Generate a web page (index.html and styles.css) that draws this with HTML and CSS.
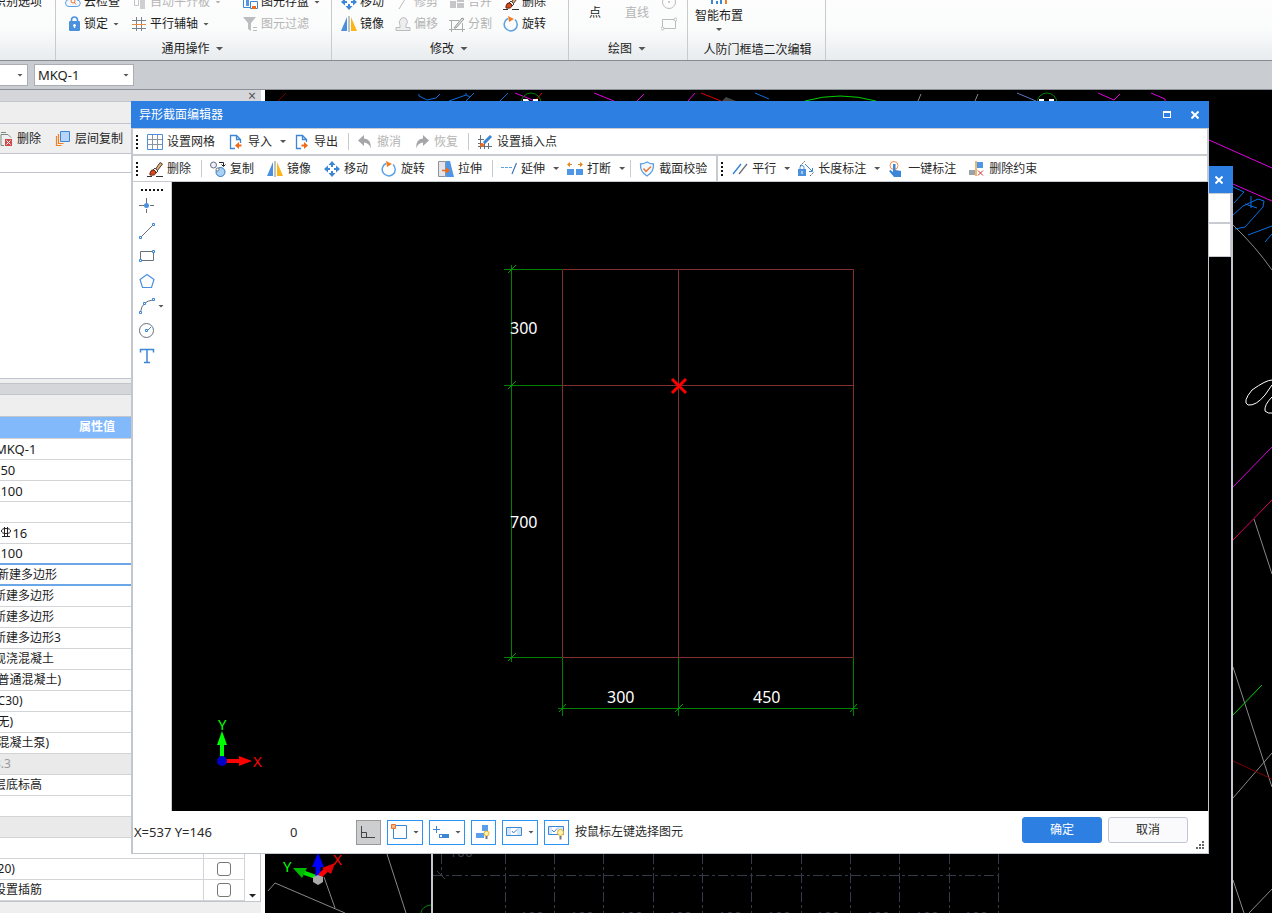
FILE: index.html
```
<!DOCTYPE html>
<html lang="zh-CN">
<head>
<meta charset="utf-8">
<title>异形截面编辑器</title>
<link rel="stylesheet" href="styles.css">
</head>
<body>
<svg class="sprite" aria-hidden="true">
  <symbol id="brush" viewBox="0 0 16 16"><path d="M8 9 13 1.500 15.500 3 10 10z" fill="#e8b070" stroke="#4a4038"/><path d="M6 9 8 7l3 3-2 2z" fill="#eee" stroke="#444"/><path d="M3 12q1-4 4-3l2 2q0 4-6 3z" fill="#d9481c" stroke="#5a2512"/><path d="M0 15.500h5M9 15.500h7" stroke="#333"/></symbol>
  <symbol id="copy" viewBox="0 0 16 16"><circle cx="3.500" cy="4" r="3" fill="#eef" stroke="#667079"/><circle cx="10.500" cy="11" r="4.500" fill="#a9d0f5" stroke="#2f78c4"/><circle cx="7.500" cy="8.500" r="1.500" fill="#fff" stroke="#667079"/><path d="M9 1.500h4.500V5M11.500 3.500l2 2 2-2" fill="none" stroke="#222"/></symbol>
  <symbol id="mirror" viewBox="0 0 16 16"><path d="M6 1v14H0z" fill="#4a90dc"/><path d="M10 1v14h6z" fill="#fdb515"/><path d="M8 0v16" stroke="#7f8a94"/></symbol>
  <symbol id="move" viewBox="0 0 16 16"><path d="M8 0l3.500 4h-7zM8 16l3.500-4h-7zM0 8l4-3.500v7zM16 8l-4-3.500v7z" fill="#3c86d6"/><path d="M8 3v3M8 10v3M3 8h3M10 8h3" stroke="#3c86d6" stroke-width="2"/></symbol>
  <symbol id="rotate" viewBox="0 0 16 16"><path d="M5 2.500A6.500 6.500 0 1 0 12 3.500" fill="none" stroke="#5ba0e6" stroke-width="1.500"/><path d="M5 0l6 3-5 3z" fill="#ef7d22"/></symbol>
  <symbol id="stretch" viewBox="0 0 16 16"><path d="M.5.5h7v15h-7z" fill="#e4e4ea" stroke="#8b939b"/><path d="M8 0h4l4 16H8z" fill="#4f97e6"/><path d="M4 9.500h5" stroke="#f06a1a" stroke-width="1.500"/><path d="M8 6.500l4 3-4 3z" fill="#f06a1a"/></symbol>
  <symbol id="extend" viewBox="0 0 16 16"><path d="M0 6.500h11" stroke="#5a9fe0" stroke-dasharray="3 1"/><path d="M15.500 2 11 13" stroke="#3c76b6" stroke-width="1.200"/></symbol>
  <symbol id="break" viewBox="0 0 16 16"><path d="M0 8h7v6H0zM9 8h7v6H9z" fill="#4f97e6"/><path d="M1 3.500h4M11 3.500h4" stroke="#e08618"/><path d="M3 1 0 3.500 3 6zM13 1l3 2.500L13 6z" fill="#e08618"/></symbol>
  <symbol id="shield" viewBox="0 0 16 16"><path d="M8 1q3 2 6.500 2 .5 8-6.500 12Q1 11 1.500 3 5 3 8 1z" fill="#f4f9ff" stroke="#5b9fe2" stroke-width="1.300"/><path d="M4.500 7.500 7 10.500 12 5.500" fill="none" stroke="#ee7328" stroke-width="1.400"/></symbol>
  <symbol id="parallel" viewBox="0 0 16 16"><path d="M1 13 9 3" stroke="#2f7fd6" stroke-width="1.300"/><path d="M7 13l8-10" stroke="#66717b" stroke-width="1.300"/></symbol>
  <symbol id="length" viewBox="0 0 16 16"><path d="M0 8h8v7H0z" fill="#4a90dc"/><path d="M2 8V6.500a2 2 0 0 1 4 0V8" fill="none" stroke="#4a90dc"/><path d="M4 10v3" stroke="#fff"/><path d="M7 3l7 7M11 10.500h3.500V7" fill="none" stroke="#3c86d6"/><path d="M2 5l5-5M12 15l4-4" stroke="#59636d" stroke-dasharray="2 1"/></symbol>
  <symbol id="touch" viewBox="0 0 16 16"><circle cx="6" cy="4.500" r="4" fill="none" stroke="#f08a4a"/><path d="M5 3h2.500v6l5.500 1v6H6L1 10l1.500-1L5 11z" fill="#3c86d6"/></symbol>
  <symbol id="unbind" viewBox="0 0 16 16"><path d="M8 1h6v6H8z" fill="#4f97e6"/><path d="M0 9h6v5H0z" fill="#9ca2ab"/><path d="M7 0v15" stroke="#e6a03c" stroke-width="1.500"/><path d="M9 9.500l5 5M14 9.500l-5 5" stroke="#d0342c"/></symbol>
  <symbol id="grid" viewBox="0 0 16 16"><path d="M.5.500h15v15H.5z" fill="#fff" stroke="#4a90dc"/><path d="M5.500 1v14M10.500 1v14M1 5.500h14M1 10.500h14" stroke="#8a949c"/></symbol>
  <symbol id="import" viewBox="0 0 16 16"><path d="M7 14.500H2.500V1.500h6l4 4V9M8.500 1.500v4h4" fill="none" stroke="#3c86d6" stroke-width="1.300"/><path d="M7 11.500l4-3.500v7z" fill="#f06a1a"/><path d="M11 11.500h2.500" stroke="#f06a1a" stroke-width="2"/></symbol>
  <symbol id="export" viewBox="0 0 16 16"><path d="M7 14.500H2.500V1.500h6l4 4V8M8.500 1.500v4h4" fill="none" stroke="#3c86d6" stroke-width="1.300"/><path d="M14 11.500 10 8v7z" fill="#f06a1a"/><path d="M7.500 11.500H10" stroke="#f06a1a" stroke-width="2"/></symbol>
  <symbol id="undo" viewBox="0 0 16 16"><path d="M1 6.500 7 1v3.500q7 0 7 10Q12 9 7 8.500V12z" fill="#a6a6a8"/></symbol>
  <symbol id="redo" viewBox="0 0 16 16"><path d="M15 6.500 9 1v3.500q-7 0-7 10Q4 9 9 8.500V12z" fill="#a6a6a8"/></symbol>
  <symbol id="insert" viewBox="0 0 16 16"><path d="M3.500 1v14M1 5.500h6M7.500 8v7M1 12.500h14M11.500 9v6M1 9.500h4" stroke="#66717b"/><path d="M7 9l7-7" stroke="#3c86d6" stroke-width="3"/><circle cx="5" cy="11" r="2" fill="#f06a1a"/></symbol>
  <symbol id="lock" viewBox="0 0 16 16"><path d="M6.500 7V4a3 3 0 0 1 6 0V7" fill="none" stroke="#4a90dc" stroke-width="1.600"/><rect x="4" y="5" width="11" height="10" rx="1" fill="#4a90dc"/><path d="M9.500 8v4M8 9.500h3" stroke="#fff" stroke-width="1.300"/></symbol>
  <symbol id="cloud" viewBox="0 0 16 16"><path d="M4 12.500a3 3 0 0 1 0-7Q5 1 9 2q3 1 3 4a3.200 3.200 0 0 1 0 6.500z" fill="#f3f8ff" stroke="#5b9fe2"/><path d="M9 8l2 2.500" stroke="#ee7328"/><circle cx="8" cy="7" r="2" fill="none" stroke="#ee7328"/></symbol>
  <symbol id="axes" viewBox="0 0 16 16"><path d="M5.500 1v14M10.500 1v14M1 12.500h14M1 4.500h14" stroke="#7a838b"/><path d="M1 8.500h14" stroke="#f08a3c"/></symbol>
  <symbol id="panels" viewBox="0 0 16 16"><path d="M3.500 2.500h4v9h-4z" fill="none" stroke="#c4c4c6"/><path d="M9 5h5v10H9z" fill="#cfcfd2"/></symbol>
  <symbol id="disk" viewBox="0 0 16 16"><path d="M4 4.500H1.500v9H8M8.500 7.500h7v7h-7z" fill="none" stroke="#3c86d6"/><path d="M4 5v7h3V5M9 3h5v3H9z" fill="#4f97e6"/><path d="M10 12h4v3h-4z" fill="#f06a1a"/></symbol>
  <symbol id="funnel" viewBox="0 0 16 16"><path d="M1 1h13L9 7v8l-3-2V7z" fill="#bcbdbf"/><path d="M11 11.500h4M11 14.500h4" stroke="#bcbdbf"/></symbol>
  <symbol id="offset" viewBox="0 0 16 16"><path d="M1 11.500h4V9.500q-2-4 1-7 3-2 5 0 3 3 0 7v2h4v3H1z" fill="#ededee" stroke="#bcbdbf"/></symbol>
  <symbol id="split" viewBox="0 0 16 16"><path d="M0 4.500h10M13.500 7v9M2.500 4v12M0 13.500h16" fill="none" stroke="#aaa"/><path d="M5 12l8-10 2 1-8 9z" fill="#ddd" stroke="#999"/></symbol>
  <symbol id="trim" viewBox="0 0 16 16"><path d="M4 15 12 2" stroke="#bbb"/></symbol>
  <symbol id="merge" viewBox="0 0 16 16"><path d="M1 7h6v7H1zM8 3h7v5H8zM8 9h7v5H8z" fill="#c6c6c9"/></symbol>
  <symbol id="rect-gray" viewBox="0 0 16 16"><path d="M1.500 3.500h13v9h-13z" fill="none" stroke="#bbb"/><circle cx="1.500" cy="12.500" r="1.500" fill="#fff" stroke="#bbb"/><circle cx="14.500" cy="3.500" r="1.500" fill="#fff" stroke="#bbb"/></symbol>
  <symbol id="circle-gray" viewBox="0 0 16 16"><circle cx="8" cy="8" r="6.500" fill="none" stroke="#bbb"/><circle cx="8" cy="8" r="1" fill="#bbb"/></symbol>
  <symbol id="page-x" viewBox="0 0 16 16"><path d="M4 3.500h7l3 3M4 1.500h5M4 14.500V3.500M4 14.500h3" fill="none" stroke="#7c8c80"/><path d="M8 8h7v7H8z" fill="#cf4a4a"/><path d="M9.500 9.500l4 4M13.500 9.500l-4 4" stroke="#fff"/></symbol>
  <symbol id="layers" viewBox="0 0 16 16"><path d="M5.500.5h9v10h-9z" fill="#b7d5fa" stroke="#3c86d6"/><path d="M3.500 3v9.500h5M1.500 5v9.500h5" fill="none" stroke="#f08020" stroke-width="1.200"/></symbol>
  <symbol id="point" viewBox="0 0 16 16"><path d="M7.500 0v5M7.500 11v4M0 7.500h5M11 7.500h4" stroke="#66717b"/><circle cx="7.500" cy="7.500" r="2.500" fill="#4a90e0"/></symbol>
  <symbol id="line" viewBox="0 0 16 16"><path d="M2 14 14 2" stroke="#66717b"/><path d="M.5 13.500h2v2h-2zM13.500.5h2v2h-2z" fill="#fff" stroke="#3c86d6"/></symbol>
  <symbol id="rect" viewBox="0 0 16 16"><path d="M1.500 3.500h13v9h-13z" fill="none" stroke="#66717b"/><path d="M.5 11.500h2v2h-2zM13.500 2.500h2v2h-2z" fill="#fff" stroke="#3c86d6"/></symbol>
  <symbol id="penta" viewBox="0 0 16 16"><path d="M8 1.500l7 5-2.500 8h-9L1 6.500z" fill="none" stroke="#4a90e0" stroke-width="1.200"/></symbol>
  <symbol id="arc" viewBox="0 0 16 16"><path d="M1.500 14Q3 3 14 2" fill="none" stroke="#66717b"/><path d="M.5 13.500h2v2h-2zM4.500 4.500h2v2h-2zM13.500.5h2v2h-2z" fill="#fff" stroke="#3c86d6"/></symbol>
  <symbol id="circle" viewBox="0 0 16 16"><circle cx="7.500" cy="7.500" r="7" fill="none" stroke="#66717b"/><path d="M8 8l4-4" stroke="#3c86d6"/><path d="M6.500 6.500h2v2h-2z" fill="#fff" stroke="#3c86d6"/></symbol>
  <symbol id="text" viewBox="0 0 16 16"><path d="M1.500 4.500v-3h13v3M8 2v12.500M5 14.500h6" fill="none" stroke="#3c86d6" stroke-width="1.500"/></symbol>
  <symbol id="ortho" viewBox="0 0 16 16"><path d="M1.500 2v11.500H15M2 8.500h4.500v5" fill="none" stroke="#444"/></symbol>
  <symbol id="snap" viewBox="0 0 16 16"><path d="M2.500 1.500h13v13h-13z" fill="none" stroke="#3c86d6"/><path d="M.5.5h4v4h-4z" fill="#f7b58a" stroke="#ee7328"/></symbol>
  <symbol id="plus" viewBox="0 0 16 16"><path d="M0 5.500h7M3.500 2v7" stroke="#3c86d6"/><path d="M6 10h10v4H6z" fill="#3c86d6"/><path d="M7 11h2v2H7z" fill="#fff"/></symbol>
  <symbol id="bulb-blocks" viewBox="0 0 16 16"><path d="M7 1h6v6H7zM1 9h8v5H1z" fill="#5a9eec"/><circle cx="11.500" cy="9.500" r="2.500" fill="#fff2b0" stroke="#e8b41c"/><path d="M11.500 12v3" stroke="#777" stroke-width="2"/></symbol>
  <symbol id="check" viewBox="0 0 16 16"><path d="M.5 3.500h15v8H.5z" fill="#d5e6fb" stroke="#3c86d6"/><path d="M5 4h6v7H5z" fill="#fff"/><path d="M6 7l1.500 2L11 5.500" fill="none" stroke="#3c86d6"/></symbol>
  <symbol id="check-bulb" viewBox="0 0 16 16"><path d="M.5 2.500h15v8H.5z" fill="#d5e6fb" stroke="#3c86d6"/><path d="M4 3h5v7H4z" fill="#fff"/><path d="M4 6l2 2 3-3.500" fill="none" stroke="#3c86d6"/><circle cx="12.500" cy="8.500" r="3" fill="#fff2b0" stroke="#e8b41c"/><path d="M12.500 12v3.500" stroke="#777" stroke-width="2"/></symbol>
  <symbol id="smart" viewBox="0 0 16 16"><path d="M1 12v4M6 13v3M10 12v4" stroke="#3c86d6" stroke-width="2"/><path d="M15 11v5" stroke="#f08020" stroke-width="2"/></symbol>
</svg>

<div class="app">
  <header class="ribbon">
    <section class="group group-select">
      <div class="row"><button>识别选项</button></div>
      <div class="row"></div>
      <div class="caption"></div>
    </section>
    <section class="group group-common">
      <div class="row"><button><svg><use href="#cloud"/></svg>云检查</button><button disabled><svg><use href="#panels"/></svg>自动平齐板<i class="arrow"></i></button><button><svg><use href="#disk"/></svg>图元存盘<i class="arrow"></i></button></div>
      <div class="row"><button><svg><use href="#lock"/></svg>锁定<i class="arrow"></i></button><button><svg><use href="#axes"/></svg>平行辅轴<i class="arrow"></i></button><button disabled><svg><use href="#funnel"/></svg>图元过滤</button></div>
      <button class="caption">通用操作<i class="arrow big"></i></button>
    </section>
    <section class="group group-modify">
      <div class="row"><button><svg><use href="#move"/></svg>移动</button><button disabled><svg><use href="#trim"/></svg>修剪</button><button disabled><svg><use href="#merge"/></svg>合并</button><button><svg><use href="#brush"/></svg>删除</button></div>
      <div class="row"><button><svg><use href="#mirror"/></svg>镜像</button><button disabled><svg><use href="#offset"/></svg>偏移</button><button disabled><svg><use href="#split"/></svg>分割</button><button><svg><use href="#rotate"/></svg>旋转</button></div>
      <button class="caption">修改<i class="arrow big"></i></button>
    </section>
    <section class="group group-draw">
      <div class="draw-tools"><button>点</button><button disabled>直线</button><div class="stack"><button disabled aria-label="圆"><svg><use href="#circle-gray"/></svg></button><button disabled aria-label="矩形"><svg><use href="#rect-gray"/></svg></button></div></div>
      <button class="caption">绘图<i class="arrow big"></i></button>
    </section>
    <section class="group group-door">
      <button class="tall"><svg><use href="#smart"/></svg><span>智能布置</span><i class="arrow"></i></button>
      <div class="caption">人防门框墙二次编辑</div>
    </section>
  </header>

  <div class="selectors">
    <label class="combo floor"><select aria-label="构件类型"><option></option></select></label>
    <label class="combo"><select aria-label="构件名称"><option>MKQ-1</option></select></label>
  </div>

  <main class="main">
    <aside class="panel">
      <div class="strip"><button aria-label="关闭面板">×</button></div>
      <div class="band"></div>
      <div class="panel-tools"><button><svg><use href="#page-x"/></svg>删除</button><button><svg><use href="#layers"/></svg>层间复制</button></div>
      <input class="search" type="text" aria-label="搜索构件">
      <div class="list"></div>
      <div class="strip second"></div>
      <div class="band"></div>
      <div class="props">
        <table>
          <thead><tr><th>属性值</th><th class="tick"></th></tr></thead>
          <tbody>
            <tr class="latin"><td class="name">MKQ-1</td><td></td></tr>
            <tr class="latin"><td>350</td><td></td></tr>
            <tr class="latin"><td>2100</td><td></td></tr>
            <tr class="latin"><td>1</td><td></td></tr>
            <tr class="latin"><td>2<svg class="rebar" viewBox="0 0 10 11"><ellipse cx="5" cy="4" rx="4.500" ry="2.500" fill="none" stroke="#222"/><path d="M3.500 0v9M6.500 0v9M1 9.500h8" stroke="#222"/></svg>16</td><td></td></tr>
            <tr class="latin"><td>2100</td><td></td></tr>
            <tr class="focused"><td>新建多边形</td><td></td></tr>
            <tr><td>新建多边形</td><td></td></tr>
            <tr><td>新建多边形</td><td></td></tr>
            <tr><td>新建多边形3</td><td></td></tr>
            <tr><td>现浇混凝土</td><td></td></tr>
            <tr><td>(普通混凝土)</td><td></td></tr>
            <tr><td>(C30)</td><td></td></tr>
            <tr><td>(无)</td><td></td></tr>
            <tr><td>(混凝土泵)</td><td></td></tr>
            <tr class="readonly"><td>3.3</td><td></td></tr>
            <tr><td>层底标高</td><td></td></tr>
            <tr><td></td><td></td></tr>
            <tr class="readonly"><td></td><td></td></tr>
            <tr><td></td><td></td></tr>
            <tr><td>(20)</td><td><input type="checkbox" aria-label="20"></td></tr>
            <tr><td>设置插筋</td><td><input type="checkbox" aria-label="设置插筋"></td></tr>
          </tbody>
        </table>
        <div class="scroll"><i class="arrow big"></i></div>
      </div>
    </aside>
    <div class="cad">
      <svg><g transform="translate(-265 -90)" fill="none">
        <g stroke="#0a6fe0"><path d="M419 94v2l8 4 9-2 4-4M449 101l17-6v-2M466 95l4 2M466 101l8-8M500 101l8-8M755 93l14 6M1233 187l11 5-10 11M1233 215l10-9 15-7 6 2-1 6-18 20-10 2M1251 196v12M1245 204l12 4M1248 235l24-9M1265 242l7-8"/></g>
        <g stroke="#e000e0"><path d="M515 93l20 8M594 93l20 8M637 101l7-7M688 101l7-8M1098 93l16 7 6-6M1151 93l14 6v3M1209 140l63 28M1233 184l39 17M1233 487l39-40"/></g>
        <g stroke="#888"><path d="M918 101l3-7M975 101l3-7M1233 225Q1256 247 1272 270M1254 519l18 55M1233 667l39 120M1233 798l39-45M1233 880l11 33M1249 913l23-24M268 891l7-8 70 30M324 877l11 31M387 854l19 59"/></g>
        <path d="M701 93l20 8M535 101l7-8" stroke="#e00000"/><path d="M278 101l8-8M1233 761l39 18" stroke="#7a0000"/><path d="M1233 540l39-40" stroke="#e00060"/><path d="M1017 93l19 8" stroke="#6078c0"/>
        <path d="M722 101l4-4 10 4z" fill="#444"/><path d="M805 101Q840 91 876 101M1233 715l29-30" stroke="#00d000"/><path d="M421 913q1-7 10-8" stroke="#008000"/>
        <circle cx="531" cy="103" r="10" stroke="#008000"/><circle cx="1047" cy="103" r="10" stroke="#008000"/>
        <path d="M523 100h4l2 2M533 100h4v2M1039 100h4v2M1049 100h4v2" stroke="#fff" stroke-width="2"/>
        <path d="M1272 380Q1266 380 1252 390 1242 402 1248 405 1256 406 1265 395L1272 385M1272 397Q1264 405 1265 411 1268 414 1272 413" stroke="#fff"/>
        <path d="M316 877l-17-6" stroke="#00e000" stroke-width="4"/><path d="M293 868l14 0-5 10z" fill="#00b800"/>
        <path d="M318 876v-12" stroke="#0000ff" stroke-width="5"/><path d="M318 853l6 14h-12z" fill="#0000ff"/>
        <path d="M320 876l6-6" stroke="#f00" stroke-width="5"/><path d="M335 863l-4 11-9-6z" fill="#e00000"/>
        <path d="M313 877l5-2 5 2v5l-5 3-5-3z" fill="#aaa"/>
        <text class="axis" x="283" y="872" fill="#0f0">Y</text><text class="axis" x="333" y="865" fill="#f00">X</text>
      </g></svg>
    </div>
  </main>

  <div class="dialog back">
    <div class="title"><button aria-label="关闭"><svg class="cross" viewBox="0 0 8 8"><path d="M.5.500l7 7M7.500.5l-7 7"/></svg></button></div>
    <div class="back-bar"></div>
    <div class="back-bar tall-bar"></div>
    <div class="back-canvas"><svg><g transform="translate(-433 -257)" fill="none">
      <path d="M433 875.500h565M505.500 854v59M554.500 854v59M603.500 854v59M653.500 854v59M702.500 854v59M751.500 854v59M801.500 854v59M850.500 854v59M899.500 854v59M949.500 854v59M998.500 854v59M441.500 854v21" stroke="#343a48" stroke-dasharray="10 3 3 3"/>
      <path d="M437 871l8 8" stroke="#343a48"/>
      <g class="ghost"><text x="449" y="857">100</text><text x="520" y="922">100</text><text x="570" y="922">100</text><text x="619" y="922">100</text><text x="668" y="922">100</text><text x="718" y="922">100</text><text x="767" y="922">100</text><text x="816" y="922">100</text><text x="866" y="922">100</text><text x="915" y="922">100</text><text x="964" y="922">100</text></g>
    </g></svg></div>
  </div>

  <div class="dialog front" role="dialog" aria-label="异形截面编辑器">
    <div class="title"><h1>异形截面编辑器</h1><button aria-label="最大化"><i class="max"></i></button><button aria-label="关闭"><svg class="cross" viewBox="0 0 8 8"><path d="M.5.500l7 7M7.500.5l-7 7"/></svg></button></div>
    <div class="toolbar">
      <i class="handle"></i>
      <button><svg><use href="#grid"/></svg>设置网格</button>
      <button class="drop"><svg><use href="#import"/></svg>导入<i class="arrow"></i></button>
      <button><svg><use href="#export"/></svg>导出</button>
      <i class="sep"></i>
      <button disabled><svg><use href="#undo"/></svg>撤消</button>
      <button disabled><svg><use href="#redo"/></svg>恢复</button>
      <i class="sep"></i>
      <button><svg><use href="#insert"/></svg>设置插入点</button>
    </div>
    <div class="toolbar">
      <i class="handle"></i>
      <button><svg><use href="#brush"/></svg>删除</button>
      <i class="sep"></i>
      <button><svg><use href="#copy"/></svg>复制</button>
      <button><svg><use href="#mirror"/></svg>镜像</button>
      <button><svg><use href="#move"/></svg>移动</button>
      <button><svg><use href="#rotate"/></svg>旋转</button>
      <button><svg><use href="#stretch"/></svg>拉伸</button>
      <i class="sep"></i>
      <button class="drop"><svg><use href="#extend"/></svg>延伸<i class="arrow"></i></button>
      <button class="drop"><svg><use href="#break"/></svg>打断<i class="arrow"></i></button>
      <i class="sep"></i>
      <button><svg><use href="#shield"/></svg>截面校验</button>
      <i class="sep full"></i>
      <i class="handle"></i>
      <button class="drop"><svg><use href="#parallel"/></svg>平行<i class="arrow"></i></button>
      <button class="drop"><svg><use href="#length"/></svg>长度标注<i class="arrow"></i></button>
      <button><svg><use href="#touch"/></svg>一键标注</button>
      <button><svg><use href="#unbind"/></svg>删除约束</button>
    </div>
    <div class="work">
      <nav class="side">
        <i class="handle flat"></i>
        <button aria-label="点"><svg><use href="#point"/></svg></button>
        <button aria-label="直线"><svg><use href="#line"/></svg></button>
        <button aria-label="矩形"><svg><use href="#rect"/></svg></button>
        <button aria-label="多边形"><svg><use href="#penta"/></svg></button>
        <button aria-label="弧"><svg><use href="#arc"/></svg><i class="arrow"></i></button>
        <button aria-label="圆"><svg><use href="#circle"/></svg></button>
        <button aria-label="文字"><svg><use href="#text"/></svg></button>
      </nav>
      <div class="canvas"><svg><g transform="translate(-172 -182)" fill="none">
        <path d="M562.500 269.500h291v388h-291zM678.500 269v389M562 385.500h292" stroke="#803030"/>
        <path d="M511.500 265v397M504 269.500h58M504 385.500h58M504 657.500h58M562.500 658v58M678.500 658v58M853.500 658v58M558 708.500h300" stroke="#008000"/>
        <path d="M508 273l8-8M508 389l8-8M508 661l8-8M559 712l7-8M675 712l8-8M850 712l7-8" stroke="#00a000"/>
        <path d="M672 379l14 14M686 379l-14 14" stroke="#f00" stroke-width="3"/>
        <g class="dims"><text x="510" y="334">300</text><text x="510" y="528">700</text><text x="607" y="703">300</text><text x="753" y="703">450</text></g>
        <path d="M222 758v-16" stroke="#0f0" stroke-width="4"/><path d="M222 731l5 14h-10z" fill="#0f0"/>
        <path d="M226 761h15" stroke="#f00" stroke-width="4"/><path d="M252 761l-13-5v10z" fill="#f00"/>
        <circle cx="222" cy="761" r="5" fill="#0000c8"/>
        <text class="axis" x="218" y="730" fill="#0f0">Y</text><text class="axis" x="253" y="767" fill="#f00">X</text>
      </g></svg></div>
    </div>
    <footer class="status">
      <output class="coords">X=537 Y=146</output>
      <output class="angle">0</output>
      <button class="mode pressed" aria-label="正交"><svg><use href="#ortho"/></svg></button>
      <button class="mode" aria-label="捕捉"><svg><use href="#snap"/></svg><i class="arrow"></i></button>
      <button class="mode" aria-label="动态输入"><svg><use href="#plus"/></svg><i class="arrow"></i></button>
      <button class="mode" aria-label="约束显示"><svg><use href="#bulb-blocks"/></svg></button>
      <button class="mode" aria-label="标注"><svg><use href="#check"/></svg><i class="arrow"></i></button>
      <button class="mode" aria-label="标注显示"><svg><use href="#check-bulb"/></svg></button>
      <span class="hint">按鼠标左键选择图元</span>
      <button class="action primary">确定</button>
      <button class="action">取消</button>
      <svg class="grip" viewBox="0 0 8 8"><path d="M6 0h2v2H6zM3 3h2v2H3zM6 3h2v2H6zM0 6h2v2H0zM3 6h2v2H3zM6 6h2v2H6z" fill="#666"/></svg>
    </footer>
  </div>
</div>
</body>
</html>
```
FILE: styles.css
```
* { box-sizing: border-box; }
body {
  margin: 0;
  font: 12px/16px "Noto Sans", "Noto Sans CJK SC", sans-serif;
  color: #1c1c1c;
  background: #000;
}
button {
  font: inherit;
  color: inherit;
  background: none;
  border: 0;
  padding: 0;
  display: flex;
  align-items: center;
  white-space: nowrap;
}
button:disabled { color: #b4b4b4; }
button svg { width: 16px; height: 16px; flex: none; }
.sprite { display: none; }
.arrow {
  flex: none;
  width: 6px;
  height: 3px;
  background: #555;
  clip-path: polygon(0 0, 100% 0, 50% 100%);
}
.arrow.big { width: 8px; height: 4px; }
button:disabled .arrow { background: #b4b4b4; }

.app {
  position: relative;
  height: 100vh;
  min-height: 600px;
  display: flex;
  flex-direction: column;
  overflow: hidden;
}

/* ribbon */
.ribbon {
  flex: none;
  height: 61px;
  display: flex;
  overflow: hidden;
  background: linear-gradient(#fdfdfd, #fafbfb 50%, #e8ecee);
  border-bottom: 1px solid #888c92;
}
.group {
  flex: none;
  height: 60px;
  display: flex;
  flex-direction: column;
  justify-content: flex-end;
  overflow: hidden;
  border-right: 1px solid #c8cbce;
}
.group .row { flex: none; height: 22px; display: grid; align-items: center; }
.group .row button { gap: 3px; }
.group .row .arrow { margin-left: 2px; }
.caption { flex: none; height: 25px; display: flex; align-items: center; justify-content: center; gap: 6px; padding: 2px 2px 0 0; }
.group-select { width: 56px; }
.group-select .row button { justify-content: flex-end; width: 42px; }
.group-common { width: 276px; }
.group-common .row { padding-left: 9px; grid-template-columns: 66px 111px auto; }
.group-modify { width: 237px; }
.group-modify .row { padding-left: 9px; grid-template-columns: repeat(4, 54px); }
.group-draw { width: 119px; }
.draw-tools { flex: none; height: 44px; display: flex; align-items: center; gap: 24px; padding-left: 20px; }
.draw-tools .stack { display: flex; flex-direction: column; gap: 6px; margin-left: -12px; }
.group-door { width: 138px; }
.tall { flex: none; align-self: flex-start; flex-direction: column; gap: 4px; margin: 0 0 4px 7px; }
.group-door .caption { padding: 5px 0 0 2px; }

.selectors {
  flex: none;
  height: 29px;
  display: flex;
  align-items: center;
  gap: 6px;
  background: #c9ccd1;
  border-bottom: 1px solid #8b9096;
}
.combo {
  width: 100px;
  height: 22px;
  display: grid;
  align-items: center;
  background: #fff;
  border: 1px solid #aaadb2;
}
.combo select {
  grid-area: 1 / 1;
  height: 20px;
  padding: 0 3px;
  border: 0;
  appearance: none;
  background: none;
  font: 13px/18px "Noto Sans", sans-serif;
  color: #1c1c1c;
}
.combo::after {
  content: "";
  grid-area: 1 / 1;
  justify-self: end;
  margin-right: 4px;
  width: 6px;
  height: 3px;
  background: #555;
  clip-path: polygon(0 0, 100% 0, 50% 100%);
}
.combo.floor { width: 28px; border-left: 0; }

/* left panel */
.main { flex: 1; min-height: 0; display: flex; }
.panel {
  flex: none;
  width: 265px;
  display: flex;
  flex-direction: column;
  background: #efefef;
  border-right: 4px solid #fff;
  overflow: hidden;
}
.strip {
  flex: none;
  height: 12px;
  display: flex;
  justify-content: flex-end;
  align-items: center;
  padding-right: 5px;
  background: #d4d6da;
  border-bottom: 1px solid #c2c5cc;
}
.strip button { font-size: 14px; line-height: 10px; color: #555; }
.strip.second { border-top: 1px solid #c2c5cc; margin-top: 4px; }
.band { flex: none; height: 22px; background: #eee; border-bottom: 1px solid #c2c5cc; }
.panel-tools { flex: none; height: 30px; display: flex; align-items: center; gap: 14px; border-bottom: 1px solid #c2c5cc; }
.panel-tools button { gap: 4px; }
.panel-tools button:first-child { margin-left: -3px; }
.search { flex: none; height: 19px; border: 0; border-bottom: 1px solid #c2c5cc; background: #fff; padding: 0; }
.list { flex: none; height: 206px; background: #fff; border-bottom: 1px solid #c2c5cc; }
.props { flex: none; display: flex; background: #fff; border-bottom: 1px solid #c2c5cc; }
.props table { width: 253px; margin-left: -9px; border-collapse: collapse; table-layout: fixed; }
.props th, .props td { height: 21px; padding: 0 3px; text-align: left; white-space: nowrap; border-bottom: 1px solid #d2d4d8; line-height: 16px; }
.props th { background: #81b9fb; color: #fff; text-align: center; }
.props td + td { text-align: center; border-left: 1px solid #d2d4d8; }
.props .tick { width: 41px; }
.props .latin { font-size: 13px; }
.props .latin td { padding-left: 2px; }
.props .latin .name { padding-left: 4px; }
.props .focused td { border-top: 2px solid #6aa6e8; border-bottom: 2px solid #6aa6e8; padding-left: 6px; }
.props .readonly { background: #eaeaea; color: #999; }
.props input { display: block; width: 14px; height: 14px; margin: 0 auto; appearance: none; border: 1px solid #777; border-radius: 3px; background: #fff; }
.rebar { width: 10px; height: 11px; margin: 0 1px; }
.scroll { flex: 1; display: flex; align-items: flex-end; justify-content: center; padding-bottom: 3px; border-left: 1px solid #d2d4d8; border-right: 1px solid #c2c5cc; }
.scroll .arrow { background: #222; }

.cad { flex: 1; min-width: 0; background: #000; }
.cad svg, .canvas svg, .back-canvas svg { display: block; width: 100%; height: 100%; }
.axis { font: 15px "Noto Sans", sans-serif; }

/* dialogs */
.dialog { position: absolute; display: flex; flex-direction: column; background: #000; }
.back { left: 431px; right: 39px; top: 166px; bottom: 0; border: 2px solid #c2c6ce; border-width: 0 2px; }
.front { left: 131px; right: 63px; top: 101px; bottom: 59px; border: 1px solid #c2c6ce; border-width: 0 1px 1px 2px; }
.title {
  flex: none;
  height: 27px;
  margin: 0 -2px;
  padding: 0 10px;
  display: flex;
  align-items: center;
  gap: 16px;
  background: #2d80e2;
  color: #fff;
}
.front .title { margin-right: -1px; padding-right: 8px; }
.back .title { padding-right: 8px; justify-content: flex-end; }
.title h1 { flex: 1; margin: 0 0 0 -2px; font: inherit; }
.title button { width: 12px; height: 16px; justify-content: center; }
.cross { width: 8px; height: 8px; stroke: #fff; stroke-width: 2; }
.title .cross { width: 8px; height: 8px; }
.max { width: 8px; height: 7px; border: 1px solid #fff; border-top-width: 2px; }
.back-bar { flex: none; height: 30px; background: #fff; border: 1px solid #c8cbd0; border-width: 1px 1px 1px 0; }
.tall-bar { height: 34px; }
.back-canvas { flex: 1; min-height: 0; }
.ghost { font: 14px "Noto Sans", sans-serif; fill: #343a48; }

.toolbar {
  flex: none;
  height: 27px;
  display: flex;
  align-items: center;
  gap: 3px;
  padding-left: 3px;
  background: #fff;
  border: 1px solid #c8cbd0;
  border-left: 0;
  color: #2a2a2a;
}
.toolbar button { height: 21px; padding: 0 5px; gap: 4px; border-radius: 3px; }
.toolbar .drop { padding-right: 0; }
.toolbar .arrow { margin-left: 4px; }
.handle {
  flex: none;
  width: 3px;
  height: 14px;
  background: repeating-linear-gradient(#111 0 2px, transparent 2px 4px) 0 0 / 2px 100% no-repeat;
}
.handle.flat { width: 22px; height: 2px; background: repeating-linear-gradient(90deg, #111 0 2px, transparent 2px 4px); }
.sep { flex: none; width: 3px; height: 17px; border-right: 1px solid #c8cbd0; }
.sep.full { height: 25px; border-right-width: 2px; }
.work { flex: 1; min-height: 0; display: flex; }
.side {
  flex: none;
  width: 39px;
  padding: 7px 0 0 6px;
  display: flex;
  flex-direction: column;
  gap: 5px;
  background: #fff;
  border-right: 1px solid #c8cbd0;
}
.side .handle { margin-left: 2px; }
.side button { height: 20px; gap: 3px; }
.canvas { flex: 1; min-width: 0; background: #000; }
.dims { font: 16px "Noto Sans", sans-serif; fill: #fff; }

.status {
  flex: none;
  height: 42px;
  display: flex;
  align-items: center;
  gap: 6px;
  padding: 0 4px 0 1px;
  background: #fff;
  color: #2a2a2a;
}
.coords { width: 150px; font-size: 13px; }
.angle { width: 60px; font-size: 13px; }
.mode { height: 25px; padding: 0 4px 0 3px; gap: 6px; border: 1px solid #2b95f6; }
.mode.pressed { background: #cdced0; border-color: #999; }
.mode .arrow { margin-right: -1px; }
.hint { flex: 1; }
.action {
  width: 80px;
  height: 26px;
  margin-bottom: 4px;
  justify-content: center;
  border: 1px solid #c0c6d4;
  border-radius: 3px;
  background: #fafafc;
}
.action.primary { background: #2d80e2; border-color: #2d80e2; color: #fff; }
.grip { flex: none; width: 8px; height: 8px; align-self: flex-end; margin: 0 0 4px 2px; }
```
